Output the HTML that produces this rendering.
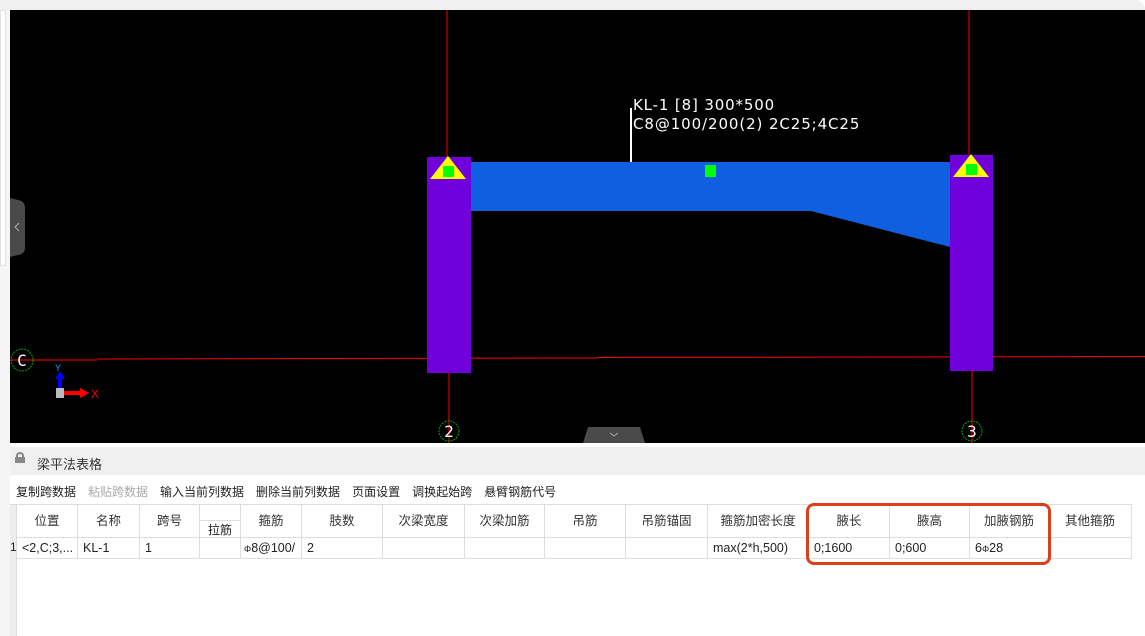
<!DOCTYPE html>
<html><head><meta charset="utf-8"><style>
*{margin:0;padding:0;box-sizing:border-box}
body{width:1145px;height:636px;overflow:hidden;background:#fff;position:relative;font-family:"Liberation Sans","Noto Sans CJK SC",sans-serif;font-size:12px;color:#222}
.a{position:absolute}
.c{position:absolute;border-right:1px solid #ddd;border-bottom:1px solid #ddd;text-align:center;white-space:nowrap;overflow:hidden}
.h{top:504px;height:34px;line-height:34px;font-size:12.5px;color:#333}
.d{top:538px;height:21px;line-height:21px;text-align:left;padding-left:5px;font-size:12.5px}
.tb span{margin-right:12px}
</style></head><body>
<div class="a" style="left:0;top:0;width:1145px;height:10px;background:#f0f0f0;border-radius:0 10px 0 0"></div>
<div class="a" style="left:0;top:10px;width:10px;height:626px;background:#f5f5f5"></div>
<div class="a" style="left:0;top:10px;width:6px;height:256px;background:#fff;border:1px solid #e4e4e4"></div>
<svg class="a" style="left:10px;top:10px" width="1135" height="433" viewBox="10 10 1135 433">
<rect x="10" y="10" width="1135" height="433" fill="#000"/>
<line x1="447" y1="10" x2="447" y2="157" stroke="#f00"/>
<line x1="969" y1="10" x2="969" y2="155" stroke="#f00"/>
<line x1="449" y1="373" x2="449" y2="443" stroke="#f00"/>
<line x1="972" y1="371" x2="972" y2="443" stroke="#f00"/>
<line x1="10" y1="360" x2="97" y2="360" stroke="#f00"/>
<line x1="97" y1="359" x2="597" y2="358" stroke="#f00"/>
<line x1="597" y1="357.5" x2="1145" y2="356.5" stroke="#f00"/>
<polygon points="471,162 950,162 950,247 811,211 471,211" fill="#0f5fe0"/>
<rect x="427" y="157" width="44" height="216" fill="#7000dc"/>
<rect x="950" y="155" width="43" height="216" fill="#7000dc"/>
<polygon points="448,156 430,179 466,179" fill="#ff0"/>
<polygon points="971,154 953,177 989,177" fill="#ff0"/>
<rect x="443" y="166" width="11" height="11" fill="#0f0"/>
<rect x="966" y="164" width="11" height="11" fill="#0f0"/>
<rect x="705" y="165" width="11" height="12" fill="#0f0"/>
<line x1="631" y1="108" x2="631" y2="162" stroke="#fff" stroke-width="2"/>
<text x="633" y="110" fill="#fff" font-size="15" letter-spacing="0.85" font-family="DejaVu Sans, sans-serif">KL-1 [8] 300*500</text>
<text x="633" y="129" fill="#fff" font-size="15" letter-spacing="0.9" font-family="DejaVu Sans, sans-serif">C8@100/200(2) 2C25;4C25</text>
<circle cx="22" cy="360" r="11" fill="none" stroke="#0a0" stroke-dasharray="2 1"/>
<text x="22" y="366" fill="#fff" font-size="16" text-anchor="middle" font-family="DejaVu Sans Mono, monospace">C</text>
<circle cx="449" cy="431" r="10" fill="none" stroke="#0a0" stroke-dasharray="2 1"/>
<text x="449" y="437" fill="#fff" font-size="16" text-anchor="middle" font-family="DejaVu Sans Mono, monospace">2</text>
<circle cx="972" cy="431" r="10" fill="none" stroke="#0a0" stroke-dasharray="2 1"/>
<text x="972" y="437" fill="#fff" font-size="16" text-anchor="middle" font-family="DejaVu Sans Mono, monospace">3</text>
<rect x="56" y="388" width="8" height="10" fill="#bbb"/>
<polygon points="58,388 58,379 55,379 60,371 65,379 62,379 62,388" fill="#00f"/>
<polygon points="64,391 80,391 80,388 89,393 80,398 80,395 64,395" fill="#f00"/>
<text x="91" y="398" fill="#f00" font-size="12">X</text>
<text x="55" y="371" fill="#0af" font-size="9">Y</text>
<path d="M10 198 L18 200 Q25 201 25 208 L25 248 Q25 254 18 255 L10 257Z" fill="#4a4a4a"/>
<path d="M19 223 L15 227 L19 231" stroke="#aaa" fill="none"/>
<path d="M588 427 L640 427 L645 443 L583 443Z" fill="#4a4a4a"/>
<path d="M610 433 L614 436 L618 433" stroke="#aaa" fill="none"/>
</svg>
<div class="a" style="left:10px;top:443px;width:1135px;height:4px;background:#fff"></div>
<div class="a" style="left:10px;top:447px;width:1135px;height:28px;background:#f0f0f0"></div>
<div class="a" style="left:16px;top:452px;width:8px;height:7px;border:2px solid #888;border-radius:4px 4px 0 0;border-bottom:none"></div>
<div class="a" style="left:15px;top:457px;width:10px;height:6px;background:#888"></div>
<div class="a" style="left:37px;top:454px;font-size:13px;color:#333">梁平法表格</div>
<div class="a tb" style="left:16px;top:483px;font-size:12px;color:#222;white-space:nowrap"><span>复制跨数据</span><span style="color:#aaa">粘贴跨数据</span><span>输入当前列数据</span><span>删除当前列数据</span><span>页面设置</span><span>调换起始跨</span><span>悬臂钢筋代号</span></div>
<div class="a" style="left:10px;top:504px;width:7px;height:132px;background:#eee;border-right:1px solid #ddd"></div>
<div class="a" style="left:10px;top:504px;width:1122px;height:1px;background:#ddd"></div>
<div class="a" style="left:10px;top:540px;font-size:12px">1</div>
<div class="c h" style="left:17px;width:61px">位置</div>
<div class="c h" style="left:78px;width:62px">名称</div>
<div class="c h" style="left:140px;width:60px">跨号</div>
<div class="c" style="left:200px;top:504px;width:41px;height:16px;border-bottom:none"></div>
<div class="c" style="left:200px;top:520px;width:41px;height:18px;line-height:18px;border-top:1px solid #ddd">拉筋</div>
<div class="c h" style="left:241px;width:61px">箍筋</div>
<div class="c h" style="left:302px;width:81px">肢数</div>
<div class="c h" style="left:383px;width:82px">次梁宽度</div>
<div class="c h" style="left:465px;width:80px">次梁加筋</div>
<div class="c h" style="left:545px;width:81px">吊筋</div>
<div class="c h" style="left:626px;width:82px">吊筋锚固</div>
<div class="c h" style="left:708px;width:101px">箍筋加密长度</div>
<div class="c h" style="left:809px;width:81px">腋长</div>
<div class="c h" style="left:890px;width:80px">腋高</div>
<div class="c h" style="left:970px;width:79px">加腋钢筋</div>
<div class="c h" style="left:1049px;width:83px">其他箍筋</div>
<div class="c d" style="left:17px;width:61px">&lt;2,C;3,...</div>
<div class="c d" style="left:78px;width:62px">KL-1</div>
<div class="c d" style="left:140px;width:60px">1</div>
<div class="c d" style="left:200px;width:41px"></div>
<div class="c d" style="left:241px;width:61px;padding-left:3px"><span style="font-size:9px">Φ</span>8@100/</div>
<div class="c d" style="left:302px;width:81px">2</div>
<div class="c d" style="left:383px;width:82px"></div>
<div class="c d" style="left:465px;width:80px"></div>
<div class="c d" style="left:545px;width:81px"></div>
<div class="c d" style="left:626px;width:82px"></div>
<div class="c d" style="left:708px;width:101px">max(2*h,500)</div>
<div class="c d" style="left:809px;width:81px">0;1600</div>
<div class="c d" style="left:890px;width:80px">0;600</div>
<div class="c d" style="left:970px;width:79px">6<span style="font-size:9px">Φ</span>28</div>
<div class="c d" style="left:1049px;width:83px"></div>
<div class="a" style="left:806px;top:503px;width:245px;height:62px;border:3px solid #d9401c;border-radius:8px"></div>
</body></html>
